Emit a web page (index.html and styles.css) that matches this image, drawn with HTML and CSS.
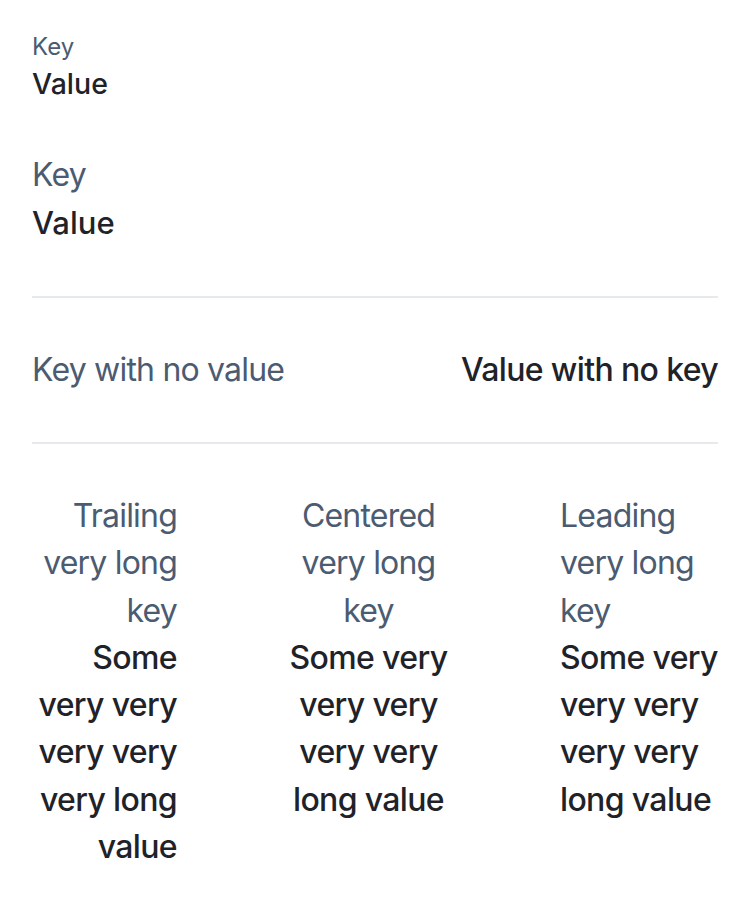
FILE: index.html
```html
<!DOCTYPE html>
<html lang="en">
<head>
<meta charset="utf-8">
<title>Key Value</title>
<link rel="stylesheet" href="styles.css">
</head>
<body>
<main class="page">
  <section class="pair pair-small">
    <div class="key">Key</div>
    <div class="value">Value</div>
  </section>
  <section class="pair pair-large">
    <div class="key">Key</div>
    <div class="value">Value</div>
  </section>
  <hr class="divider">
  <section class="row">
    <div class="key">Key with no value</div>
    <div class="value">Value with no key</div>
  </section>
  <hr class="divider">
  <section class="columns">
    <div class="col col-trailing">
      <div class="key">Trailing very long key</div>
      <div class="value">Some very very very very very long value</div>
    </div>
    <div class="col col-centered">
      <div class="key">Centered very long key</div>
      <div class="value">Some very very very very very long value</div>
    </div>
    <div class="col col-leading">
      <div class="key">Leading very long key</div>
      <div class="value">Some very very very very very long value</div>
    </div>
  </section>
</main>
</body>
</html>
```
FILE: styles.css
```css
* { box-sizing: border-box; }
html, body { margin: 0; padding: 0; background: #ffffff; }
body {
  font-family: Inter, "Noto Sans", "Liberation Sans", sans-serif;
  -webkit-font-smoothing: antialiased;
}
.page {
  padding: 32px 32px 0 32px;
  display: flex;
  flex-direction: column;
}
.key { color: #4b5b71; font-weight: 400; }
.value { color: #1f2329; font-weight: 500; }

.pair-small .key { font-size: 24px; line-height: 30px; }
.pair-small .value { font-size: 28.5px; line-height: 38px; margin-top: 3px; }

.pair-large { margin-top: 50px; }
.pair-large .key { font-size: 32px; line-height: 44px; letter-spacing: -0.025em; }
.pair-large .value { font-size: 31px; line-height: 42px; margin-top: 5px; }

.divider {
  margin: 52px 0 0 0;
  border: 0;
  height: 2px;
  background: #e7eaed;
}
.row {
  margin-top: 50px;
  display: flex;
  justify-content: space-between;
  font-size: 32px;
  line-height: 44px;
}
.row + .divider { margin-top: 50px; }

.columns {
  margin-top: 48px;
  display: grid;
  grid-template-columns: 145px 1fr 158px;
  column-gap: 100px;
  font-size: 32px;
  line-height: 47.3px;
}
.row .key, .columns .key { letter-spacing: -0.025em; }
.row .value, .columns .value { letter-spacing: -0.02em; }
.col-trailing { text-align: right; }
.col-centered { text-align: center; }
.col-leading { text-align: left; }
```
